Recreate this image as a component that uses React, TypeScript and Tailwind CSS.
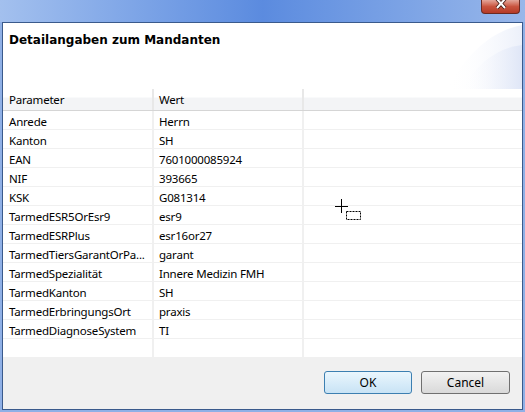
const rows: [string, string][] = [
  ['Anrede', 'Herrn'],
  ['Kanton', 'SH'],
  ['EAN', '7601000085924'],
  ['NIF', '393665'],
  ['KSK', 'G081314'],
  ['TarmedESR5OrEsr9', 'esr9'],
  ['TarmedESRPlus', 'esr16or27'],
  ['TarmedTiersGarantOrPa...', 'garant'],
  ['TarmedSpezialität', 'Innere Medizin FMH'],
  ['TarmedKanton', 'SH'],
  ['TarmedErbringungsOrt', 'praxis'],
  ['TarmedDiagnoseSystem', 'TI'],
  ['', ''],
]

const ui = { fontFamily: '"Noto Sans", "Open Sans", sans-serif' }

function Row({ param, value }: { param: string; value: string }) {
  return (
    <div className="flex h-[19px] border-b border-[#f0f0f0] text-[11.5px] tracking-[-0.2px] leading-[17px] text-black">
      <div className="w-[149px] pl-[6px] pt-[2px] whitespace-nowrap overflow-hidden">{param}</div>
      <div className="w-[2px] bg-[#f0f0f0]" />
      <div className="w-[148px] pl-[5px] pt-[2px] whitespace-nowrap">{value}</div>
      <div className="w-[2px] bg-[#f0f0f0]" />
      <div className="flex-1" />
    </div>
  )
}

export default function App() {
  return (
    <div className="w-[525px] h-[412px] flex flex-col bg-[#8fb0e6] relative overflow-hidden" style={ui}>
      {/* Fensterrahmen oben */}
      <div className="h-[22px] shrink-0 relative bg-gradient-to-r from-[#a3c0ee] via-[#5b8bdf] to-[#98b7ea]">
        <div className="absolute right-[5px] top-0 w-[39px] h-[14px] rounded-b-[4px] border border-t-0 border-[#6b2a22] bg-gradient-to-b from-[#e3a69a] via-[#c9543f] to-[#b53a26] flex items-start justify-center">
          <svg width="12" height="10" viewBox="0 0 12 10">
            <path d="M2 -1 L10 8 M10 -1 L2 8" stroke="#3a1510" strokeWidth="3.5" />
            <path d="M2 -1 L10 8 M10 -1 L2 8" stroke="#ffffff" strokeWidth="2" />
          </svg>
        </div>
      </div>
      <div className="flex-1 flex px-[2px] pb-[2px]">
        <div className="flex-1 flex flex-col border border-[#3a5a8c] bg-white">
          {/* Titelbereich */}
          <div className="h-[66px] shrink-0 relative pl-[6px] pt-[8px]">
            <svg className="absolute right-0 top-0" width="80" height="66" viewBox="0 0 80 66">
              <defs>
                <linearGradient id="g1" x1="0" x2="1" y1="0" y2="0">
                  <stop offset="0" stopColor="#ffffff" stopOpacity="0" />
                  <stop offset="1" stopColor="#dfe6f7" />
                </linearGradient>
              </defs>
              <path d="M5 66 C 25 30, 50 8, 80 2 L 80 66 Z" fill="url(#g1)" opacity="0.6" />
              <path d="M20 66 C 35 40, 55 25, 80 22 L 80 66 Z" fill="url(#g1)" />
            </svg>
            <h1 className="relative text-[12px] font-bold text-black" style={{ fontFamily: '"DejaVu Sans", sans-serif' }}>
              Detailangaben zum Mandanten
            </h1>
          </div>
          {/* Tabelle */}
          <div className="flex h-[22px] shrink-0 text-[11.5px] tracking-[-0.2px] leading-[17px] text-black border-b border-[#d5d5d5] bg-[linear-gradient(#ffffff_0%,#ffffff_40%,#f3f4f6_41%,#f3f4f6_100%)]">
            <div className="w-[149px] pl-[6px] pt-[2px]">Parameter</div>
            <div className="w-[2px] bg-[#e8e8e8]" />
            <div className="w-[148px] pl-[5px] pt-[2px]">Wert</div>
            <div className="w-[2px] bg-[#e8e8e8]" />
            <div className="flex-1" />
          </div>
          {rows.map(([p, v], i) => (
            <Row key={i} param={p} value={v} />
          ))}
          {/* Schaltflächen */}
          <div className="flex-1 bg-[#f0f0f0] flex justify-end items-start pt-[13px] pr-[12px] gap-[9px]">
            <button className="w-[88px] h-[23px] rounded-[3px] border border-[#3c7fb1] bg-gradient-to-b from-[#eaf6fd] to-[#c8e3f5] text-[12px] text-black">
              OK
            </button>
            <button className="w-[89px] h-[23px] rounded-[3px] border border-[#707070] bg-gradient-to-b from-[#f2f2f2] to-[#d9d9d9] text-[12px] text-black">
              Cancel
            </button>
          </div>
        </div>
      </div>
      {/* Mauszeiger */}
      <svg className="absolute left-[334px] top-[198px]" width="30" height="24" viewBox="0 0 30 24">
        <path d="M7.5 1 V15 M1 8.5 H14" stroke="#000" strokeWidth="1" />
        <rect x="12.5" y="13.5" width="14" height="8" fill="none" stroke="#000" strokeDasharray="2 1" />
      </svg>
    </div>
  )
}
